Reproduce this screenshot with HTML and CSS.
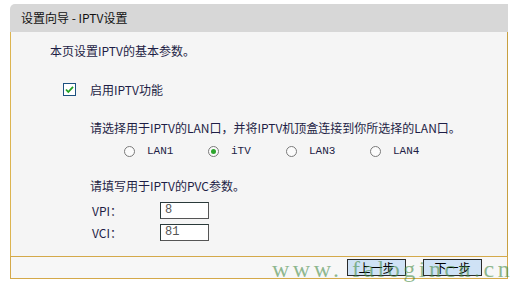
FILE: index.html
```html
<!DOCTYPE html>
<html>
<head>
<meta charset="utf-8">
<link rel="stylesheet" href="styles.css">
</head>
<body>
<div class="panel">
  <div class="title">设置向导 - IPTV设置</div>
  <div class="content">
    <div class="line">本页设置IPTV的基本参数。</div>
    <div class="check-row">
      <span class="checkbox"><svg width="13" height="13" viewBox="0 0 13 13"><rect x="0.5" y="0.5" width="12" height="12" fill="#fff" stroke="#1c5180"/><path d="M3 6.5 L5.3 9 L10 3.8" fill="none" stroke="#21a121" stroke-width="1.8"/></svg></span>
      <span>启用IPTV功能</span>
    </div>
    <div class="sub">
      <div class="line">请选择用于IPTV的LAN口，并将IPTV机顶盒连接到你所选择的LAN口。</div>
      <div class="radios">
        <span class="opt"><span class="radio"></span><span>LAN1</span></span>
        <span class="opt"><span class="radio on"></span><span>iTV</span></span>
        <span class="opt"><span class="radio"></span><span>LAN3</span></span>
        <span class="opt"><span class="radio"></span><span>LAN4</span></span>
      </div>
      <div class="line pvc">请填写用于IPTV的PVC参数。</div>
      <div class="field"><span class="lbl">VPI：</span><span class="input">8</span></div>
      <div class="field second"><span class="lbl">VCI：</span><span class="input">81</span></div>
    </div>
  </div>
  <div class="footer">
    <span class="btn">上一步</span>
    <span class="btn">下一步</span>
  </div>
</div>
<div class="watermark">www. falogincn.cn</div>
</body>
</html>
```
FILE: styles.css
```css
html, body {
  margin: 0;
  padding: 0;
  background: #ffffff;
}
body {
  width: 515px;
  height: 283px;
  position: relative;
  overflow: hidden;
  font-family: "Noto Sans CJK SC", sans-serif;
  font-size: 12px;
  color: #1e1e46;
}
.panel {
  margin: 4px 0 0 10px;
  width: 498px;
}
.title {
  height: 28px;
  line-height: 28px;
  background: #d7d7d7;
  border-top-left-radius: 5px;
  padding-left: 11px;
  color: #111;
}
.content {
  background: #f5f5f5;
  border-left: 1px solid #dcb450;
  border-right: 1px solid #c8a040;
  height: 224px;
  box-sizing: border-box;
  padding: 11px 0 0 39px;
}
.line {
  height: 16px;
  line-height: 16px;
  white-space: nowrap;
}
.check-row {
  display: flex;
  align-items: center;
  height: 16px;
  margin-top: 22px;
  padding-left: 13px;
  gap: 14px;
}
.checkbox {
  display: flex;
  width: 13px;
  height: 13px;
}
.sub {
  padding-left: 40px;
  margin-top: 23px;
}
.radios {
  display: grid;
  grid-template-columns: 84px 78px 84px auto;
  margin-top: 7px;
  padding-left: 34px;
  height: 16px;
  align-items: center;
  font-family: "Liberation Mono", "Noto Sans CJK SC", monospace;
  font-size: 11px;
}
.opt {
  display: flex;
  align-items: center;
  gap: 12px;
}
.radio {
  width: 11px;
  height: 11px;
  border: 1px solid #7a7a7a;
  border-radius: 50%;
  background: #fbfbfb;
  box-sizing: border-box;
  display: flex;
  align-items: center;
  justify-content: center;
}
.radio.on::after {
  content: "";
  width: 5px;
  height: 5px;
  border-radius: 50%;
  background: #2ea52e;
}
.pvc {
  margin-top: 19px;
}
.field {
  display: flex;
  align-items: center;
  margin-top: 8px;
  height: 17px;
}
.field.second {
  margin-top: 5px;
}
.lbl {
  width: 70px;
  padding-left: 2px;
  box-sizing: border-box;
}
.input {
  width: 49px;
  height: 17px;
  box-sizing: border-box;
  background: #fff;
  border: 1px solid #2a3a3a;
  border-right-color: #555;
  border-bottom-color: #555;
  padding-left: 4px;
  line-height: 15px;
  font-family: "Liberation Mono", monospace;
  font-size: 12px;
  color: #555;
}
.footer {
  height: 23px;
  box-sizing: border-box;
  background: #f7f7f7;
  border: 1px solid #d4a94a;
  display: flex;
  align-items: center;
  justify-content: flex-end;
  gap: 17px;
  padding-right: 25px;
}
.btn {
  width: 59px;
  height: 17px;
  box-sizing: border-box;
  background: #cfe2f5;
  border: 1px solid #2a2a2a;
  line-height: 15px;
  text-align: center;
  color: #000;
}
.watermark {
  position: absolute;
  left: 272px;
  top: 255px;
  font-family: "Liberation Serif", serif;
  font-size: 24px;
  letter-spacing: 3.5px;
  line-height: 28px;
  color: rgba(70, 140, 70, 0.6);
  white-space: nowrap;
}
```
